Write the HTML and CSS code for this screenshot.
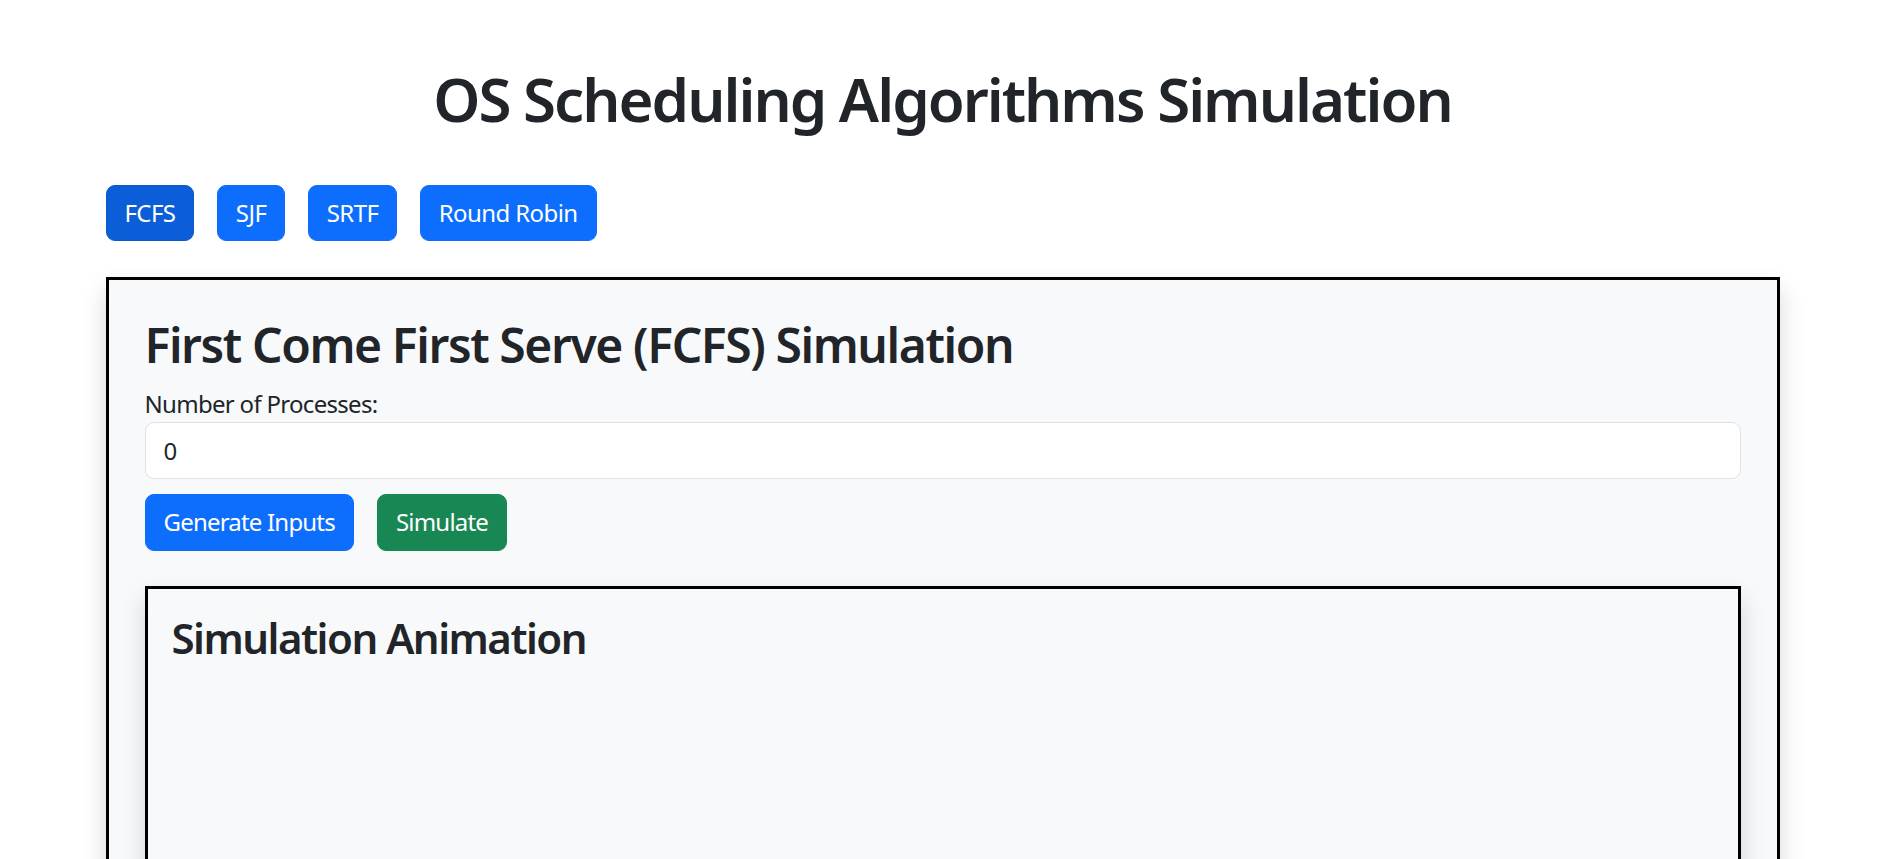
FILE: index.html
```html
<!DOCTYPE html>
<html lang="en">
<head>
<meta charset="utf-8">
<title>OS Scheduling Algorithms Simulation</title>
<link rel="stylesheet" href="styles.css">
</head>
<body>
<div class="container">
  <h1 class="page-title">OS Scheduling Algorithms Simulation</h1>
  <div class="algo-tabs">
    <button class="btn btn-primary is-active">FCFS</button>
    <button class="btn btn-primary">SJF</button>
    <button class="btn btn-primary">SRTF</button>
    <button class="btn btn-primary">Round Robin</button>
  </div>
  <section class="sim-panel">
    <h2 class="panel-title">First Come First Serve (FCFS) Simulation</h2>
    <label class="field-label" for="num-processes">Number of Processes:</label>
    <input id="num-processes" class="form-control" type="text" value="0">
    <div class="actions">
      <button class="btn btn-primary">Generate Inputs</button>
      <button class="btn btn-success">Simulate</button>
    </div>
    <div class="anim-box">
      <h3 class="anim-title">Simulation Animation</h3>
    </div>
  </section>
</div>
</body>
</html>
```
FILE: styles.css
```css
* { box-sizing: border-box; }

html, body {
  margin: 0;
  padding: 0;
  background: #fff;
}

body {
  font-family: "Noto Sans", "Open Sans", sans-serif;
  font-size: 24px;
  line-height: 36px;
  letter-spacing: -0.7px;
  color: #212529;
  overflow: hidden;
}

.container {
  width: 1674px;
  margin: 0 auto;
  padding-top: 63px;
  position: relative;
  left: 1px;
}

.page-title {
  margin: 0;
  font-size: 60px;
  line-height: 72px;
  font-weight: 600;
  letter-spacing: -2px;
  text-align: center;
}

.algo-tabs {
  display: flex;
  gap: 22.5px;
  margin-top: 50px;
}

.btn {
  font-family: inherit;
  font-size: 24px;
  line-height: 36px;
  font-weight: 400;
  letter-spacing: -0.6px;
  padding: 9px 18px;
  height: 56px;
  border: 1.5px solid transparent;
  border-radius: 9px;
  color: #fff;
  cursor: pointer;
}

.btn-primary {
  background: #0d6efd;
  border-color: #0d6efd;
}

.btn-primary.is-active {
  background: #0b5ed7;
  border-color: #0a58ca;
}

.btn-success {
  background: #198754;
  border-color: #198754;
}

.sim-panel {
  margin-top: 36px;
  border: 3px solid #000;
  background: #f8f9fa;
  padding: 36px 36px 0;
  box-shadow: 0 12px 24px rgba(0, 0, 0, 0.15);
  height: 700px;
}

.panel-title {
  margin: 0 0 12px;
  font-size: 48px;
  line-height: 57.6px;
  font-weight: 600;
  letter-spacing: -1.4px;
}

.field-label {
  display: block;
}

.form-control {
  display: block;
  width: 100%;
  height: 57px;
  padding: 9px 18px;
  font-family: inherit;
  font-size: 24px;
  line-height: 36px;
  color: #212529;
  background: #fff;
  border: 1.5px solid #dee2e6;
  border-radius: 9px;
  outline: none;
}

.actions {
  display: flex;
  gap: 23px;
  margin-top: 15px;
}

.actions .btn {
  height: 57px;
  letter-spacing: -0.8px;
}

.anim-box {
  margin-top: 35px;
  border: 3px solid #000;
  background: #f8f9fa;
  padding: 24px;
  box-shadow: 0 12px 24px rgba(0, 0, 0, 0.15);
  height: 500px;
}

.anim-title {
  margin: 0;
  font-size: 42px;
  line-height: 50.4px;
  font-weight: 600;
  letter-spacing: -1.5px;
}
```
